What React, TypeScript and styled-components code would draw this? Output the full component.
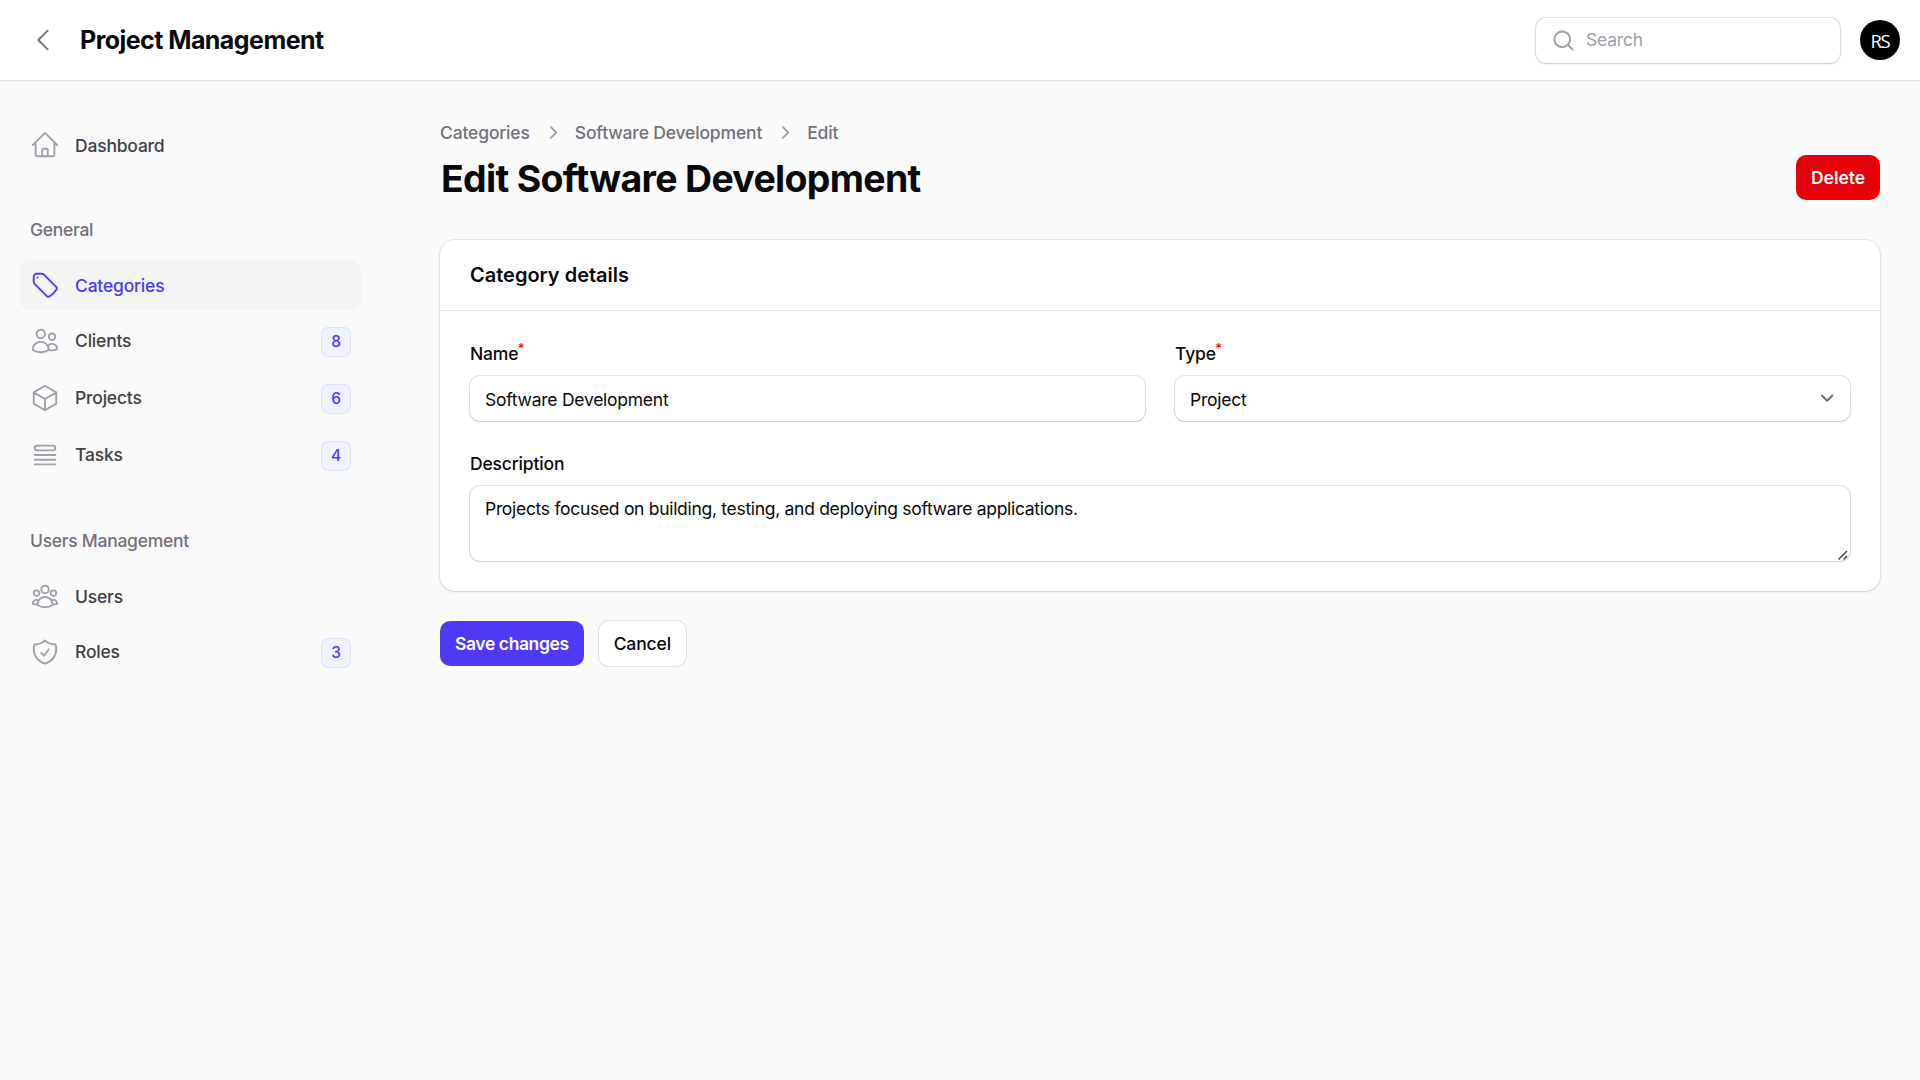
import React from "react";
import styled, { createGlobalStyle } from "styled-components";
import {
  HiOutlineChevronLeft,
  HiOutlineCube,
  HiOutlineHome,
  HiOutlineQueueList,
  HiOutlineShieldCheck,
  HiOutlineTag,
  HiOutlineUserGroup,
  HiOutlineUsers,
} from "react-icons/hi2";
import type { IconType } from "react-icons";

const font = `Inter, "Liberation Sans", sans-serif`;

const GlobalStyle = createGlobalStyle`
  *, *::before, *::after { box-sizing: border-box; }
  body {
    margin: 0;
    background: #fafafa;
    color: #09090b;
    font-family: ${font};
    font-size: 17.5px;
    line-height: 25px;
  }
  h1, h2, p, ul { margin: 0; padding: 0; }
  button, input, textarea { font: inherit; color: inherit; }
  svg { display: block; flex: none; }
`;

const ring = "0 0 0 1px rgba(9, 9, 11, 0.1), 0 1px 3px rgba(0, 0, 0, 0.1), 0 1px 2px -1px rgba(0, 0, 0, 0.1)";

const Page = styled.div`
  min-height: 100vh;
  display: flex;
  flex-direction: column;
`;

const Topbar = styled.header`
  display: flex;
  align-items: center;
  height: 80px;
  padding: 0 20px 0 28px;
  background: #fff;
  box-shadow: 0 0 0 1px rgba(9, 9, 11, 0.05), 0 1px 2px rgba(0, 0, 0, 0.07);
`;

const BackButton = styled.button`
  display: flex;
  padding: 0;
  border: 0;
  background: none;
  color: #71717b;
  font-size: 30px;
`;

const Brand = styled.div`
  margin-left: 22px;
  font-size: 25px;
  line-height: 30px;
  font-weight: 700;
  letter-spacing: -0.55px;
`;

const SearchBox = styled.label`
  display: flex;
  align-items: center;
  gap: 10px;
  width: 304px;
  height: 45px;
  margin: 1px 20px 0 auto;
  padding: 0 15px;
  border-radius: 10px;
  background: #fff;
  color: #9f9fa9;
  box-shadow: ${ring};
`;

const SearchInput = styled.input`
  min-width: 0;
  flex: 1;
  padding: 0 0 2px;
  border: 0;
  outline: 0;
  background: none;
  letter-spacing: -0.2px;
  &::placeholder { color: #9f9fa9; opacity: 1; }
`;

const Avatar = styled.div`
  display: grid;
  place-items: center;
  width: 40px;
  height: 40px;
  border-radius: 50%;
  background: #000;
  color: #fff;
  font-family: "Open Sans", "Noto Sans", sans-serif;
  font-size: 18.5px;
  font-weight: 400;
  letter-spacing: -1.2px;
`;

const Body = styled.div`
  display: flex;
  flex: 1;
`;

const Sidebar = styled.nav`
  display: flex;
  flex-direction: column;
  gap: 35px;
  width: 400px;
  padding: 40px 39px 40px 20px;
`;

const GroupLabel = styled.div`
  padding: 12px 10px 13px;
  margin-bottom: 5px;
  font-weight: 450;
  letter-spacing: -0.28px;
  color: #71717b;
`;

const NavList = styled.ul`
  display: flex;
  flex-direction: column;
  gap: 5px;
  list-style: none;
`;

const NavItem = styled.li<{ $active?: boolean; $tall?: boolean }>`
  display: flex;
  align-items: center;
  gap: 15px;
  height: ${(p) => (p.$tall ? 52 : 50)}px;
  padding: 0 10px;
  border-radius: 10px;
  background: ${(p) => (p.$active ? "#f4f4f5" : "transparent")};
  color: ${(p) => (p.$active ? "#4f39f6" : "#3f3f46")};
  font-weight: 450;
  letter-spacing: -0.2px;
  svg {
    font-size: 30px;
    color: ${(p) => (p.$active ? "#4f39f6" : "#9f9fa9")};
  }
`;

const NavText = styled.span<{ $raised?: boolean }>`
  flex: 1;
  padding: ${(p) => (p.$raised ? "0 0 1px" : "1px 0 0")};
`;

const Badge = styled.span`
  display: grid;
  place-items: center;
  width: 30px;
  height: 30px;
  margin-top: 2px;
  border-radius: 7.5px;
  background: #eef2ff;
  box-shadow: inset 0 0 0 1px rgba(79, 57, 246, 0.1);
  color: #4f39f6;
  font-size: 15.5px;
  line-height: 20px;
`;

const Main = styled.main`
  flex: 1;
  padding: 40px;
`;

const Crumbs = styled.div`
  display: flex;
  align-items: center;
  gap: 10px;
  margin-bottom: 10px;
  color: #71717b;
  font-weight: 450;
  letter-spacing: -0.16px;
`;

const Heading = styled.div`
  display: flex;
  justify-content: space-between;
  align-items: center;
  margin-bottom: 40px;
`;

const Title = styled.h1`
  padding: 1px 0 0 1px;
  margin-bottom: -1px;
  font-size: 37.5px;
  line-height: 45px;
  font-weight: 700;
  letter-spacing: -0.7px;
`;

const Button = styled.button<{ $kind: "primary" | "danger" | "plain"; $track?: number }>`
  height: 45px;
  padding: 0 15px;
  border: 0;
  border-radius: 10px;
  font-weight: ${(p) => (p.$kind === "plain" ? 500 : 600)};
  letter-spacing: ${(p) => p.$track ?? 0}px;
  white-space: nowrap;
  color: ${(p) => (p.$kind === "plain" ? "#09090b" : "#fff")};
  background: ${(p) => ({ primary: "#4f39f6", danger: "#e7000b", plain: "#fff" })[p.$kind]};
  box-shadow: ${(p) => (p.$kind === "plain" ? "0 0 0 1px rgba(9, 9, 11, 0.1)" : "none")};
`;

const Card = styled.section`
  border-radius: 15px;
  background: #fff;
  box-shadow: 0 0 0 1px rgba(9, 9, 11, 0.07), 0 1px 3px rgba(0, 0, 0, 0.1), 0 1px 2px -1px rgba(0, 0, 0, 0.1);
`;

const CardTitle = styled.h2`
  padding: 20px 30px;
  font-size: 20px;
  line-height: 30px;
  font-weight: 600;
`;

const Fields = styled.div`
  display: grid;
  grid-template-columns: 1fr 1fr;
  gap: 30px;
  padding: 30px;
  border-top: 1px solid #e4e4e7;
`;

const Field = styled.label<{ $wide?: boolean }>`
  display: flex;
  flex-direction: column;
  gap: 10px;
  grid-column: ${(p) => (p.$wide ? "1 / -1" : "auto")};
`;

const Label = styled.span`
  font-weight: 500;
  letter-spacing: -0.16px;
`;

const Required = styled.sup`
  position: relative;
  top: -7px;
  left: -0.5px;
  vertical-align: baseline;
  font-size: 13px;
  line-height: 0;
  color: #e7000b;
`;

const TextInput = styled.input`
  height: 45px;
  padding: 1px 15px 0;
  border: 0;
  border-radius: 10px;
  outline: 0;
  background: #fff;
  letter-spacing: -0.25px;
  box-shadow: ${ring};
`;

const SelectBox = styled.div`
  display: flex;
  align-items: center;
  justify-content: space-between;
  height: 45px;
  padding: 0 10px 0 15px;
  border-radius: 10px;
  letter-spacing: -0.25px;
  box-shadow: ${ring};
`;

const SelectValue = styled.span`
  padding-top: 1px;
`;

const AreaFrame = styled.div`
  position: relative;
  display: grid;
`;

const TextArea = styled.textarea`
  display: block;
  height: 75px;
  padding: 10px 15px;
  border: 0;
  border-radius: 10px;
  outline: 0;
  resize: none;
  background: #fff;
  letter-spacing: -0.3px;
  box-shadow: ${ring};
`;

const Grip = styled.svg`
  position: absolute;
  right: 1px;
  bottom: 0;
`;

const Actions = styled.div`
  display: flex;
  gap: 15px;
  margin-top: 30px;
`;

const SearchIcon = () => (
  <svg width="25" height="25" viewBox="0 0 20 20" fill="currentColor">
    <path
      fillRule="evenodd"
      clipRule="evenodd"
      d="M9 3.5a5.5 5.5 0 1 0 0 11 5.5 5.5 0 0 0 0-11ZM2 9a7 7 0 1 1 12.452 4.391l3.328 3.329a.75.75 0 1 1-1.06 1.06l-3.329-3.328A7 7 0 0 1 2 9Z"
    />
  </svg>
);

const CrumbArrow = () => (
  <svg width="25" height="25" viewBox="0 0 20 20" fill="#9f9fa9">
    <path
      fillRule="evenodd"
      clipRule="evenodd"
      d="M8.22 5.22a.75.75 0 0 1 1.06 0l4.25 4.25a.75.75 0 0 1 0 1.06l-4.25 4.25a.75.75 0 0 1-1.06-1.06L11.94 10 8.22 6.28a.75.75 0 0 1 0-1.06Z"
    />
  </svg>
);

const SelectArrow = () => (
  <svg width="26.25" height="26.25" viewBox="0 0 20 20" fill="none">
    <path stroke="#6b7280" strokeLinecap="round" strokeLinejoin="round" strokeWidth="1.5" d="m6 8 4 4 4-4" />
  </svg>
);

type Item = { icon: IconType; text: string; badge?: number; active?: boolean };

const groups: { label?: string; items: Item[] }[] = [
  { items: [{ icon: HiOutlineHome, text: "Dashboard" }] },
  {
    label: "General",
    items: [
      { icon: HiOutlineTag, text: "Categories", active: true },
      { icon: HiOutlineUsers, text: "Clients", badge: 8 },
      { icon: HiOutlineCube, text: "Projects", badge: 6 },
      { icon: HiOutlineQueueList, text: "Tasks", badge: 4 },
    ],
  },
  {
    label: "Users Management",
    items: [
      { icon: HiOutlineUserGroup, text: "Users" },
      { icon: HiOutlineShieldCheck, text: "Roles", badge: 3 },
    ],
  },
];

export default function App() {
  return (
    <Page>
      <GlobalStyle />
      <Topbar>
        <BackButton aria-label="Collapse sidebar">
          <HiOutlineChevronLeft />
        </BackButton>
        <Brand>Project Management</Brand>
        <SearchBox>
          <SearchIcon />
          <SearchInput placeholder="Search" />
        </SearchBox>
        <Avatar>RS</Avatar>
      </Topbar>
      <Body>
        <Sidebar>
          {groups.map((group, i) => (
            <div key={i}>
              {group.label && <GroupLabel>{group.label}</GroupLabel>}
              <NavList>
                {group.items.map(({ icon: Icon, text, badge, active }) => (
                  <NavItem key={text} $active={active} $tall={badge !== undefined}>
                    <Icon />
                    <NavText $raised={badge !== undefined}>{text}</NavText>
                    {badge !== undefined && <Badge>{badge}</Badge>}
                  </NavItem>
                ))}
              </NavList>
            </div>
          ))}
        </Sidebar>
        <Main>
          <Crumbs>
            <span>Categories</span>
            <CrumbArrow />
            <span>Software Development</span>
            <CrumbArrow />
            <span>Edit</span>
          </Crumbs>
          <Heading>
            <Title>Edit Software Development</Title>
            <Button $kind="danger" $track={-0.05}>Delete</Button>
          </Heading>
          <Card>
            <CardTitle>Category details</CardTitle>
            <Fields>
              <Field>
                <Label>Name<Required>*</Required></Label>
                <TextInput defaultValue="Software Development" />
              </Field>
              <Field as="div">
                <Label>Type<Required>*</Required></Label>
                <SelectBox>
                  <SelectValue>Project</SelectValue>
                  <SelectArrow />
                </SelectBox>
              </Field>
              <Field $wide>
                <Label>Description</Label>
                <AreaFrame>
                  <TextArea
                    spellCheck={false}
                    defaultValue="Projects focused on building, testing, and deploying software applications."
                  />
                  <Grip width="11" height="11" viewBox="0 0 11 11" stroke="#52525b" strokeWidth="1.6">
                    <path d="M0.5 9.5 9 1M5.5 9.5 9 6" />
                  </Grip>
                </AreaFrame>
              </Field>
            </Fields>
          </Card>
          <Actions>
            <Button $kind="primary" $track={-0.4}>Save changes</Button>
            <Button $kind="plain" $track={-0.1}>Cancel</Button>
          </Actions>
        </Main>
      </Body>
    </Page>
  );
}
